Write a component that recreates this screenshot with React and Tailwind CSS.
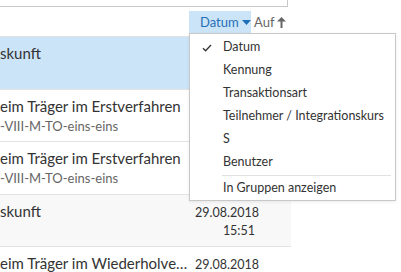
import React from 'react';

const rows = [
  { title: 'skunft', sub: '', date: '', time: '', bg: 'bg-[#cce4f7]' },
  { title: 'eim Träger im Erstverfahren', sub: '-VIII-M-TO-eins-eins', date: '', time: '', bg: 'bg-white' },
  { title: 'eim Träger im Erstverfahren', sub: '-VIII-M-TO-eins-eins', date: '', time: '', bg: 'bg-white' },
  { title: 'skunft', sub: '', date: '29.08.2018', time: '15:51', bg: 'bg-[#f8f8f8]' },
  { title: 'eim Träger im Wiederholverfahren', sub: '', date: '29.08.2018', time: '', bg: 'bg-white' },
];

const menuItems = ['Datum', 'Kennung', 'Transaktionsart', 'Teilnehmer / Integrationskurs', 'S', 'Benutzer'];

const Check = () => (
  <svg width="10" height="8" viewBox="0 0 10 8" className="text-[#333]">
    <path d="M1 4.2 L3.6 6.8 L9 1" fill="none" stroke="currentColor" strokeWidth="1.3" />
  </svg>
);

const App = () => {
  return (
    <div className="relative w-[401px] h-[272px] overflow-hidden bg-white text-[#333] font-['Lato',sans-serif]">
      {/* search box remains */}
      <div className="h-[7px] w-[288px] border-b border-r border-[#c8c8c8]" />

      {/* sort bar */}
      <div className="w-[291px] h-[29px] pt-[4px] flex items-start">
        <div className="ml-[189px] h-[22px] w-[62px] bg-[#cce4f7] flex items-center pl-[11px] gap-[3px]">
          <span className="text-[13px] leading-none text-[#1f6fb8]">Datum</span>
          <svg width="9" height="5" viewBox="0 0 9 5">
            <path d="M0 0 L9 0 L4.5 5 Z" fill="#1f6fb8" />
          </svg>
        </div>
        <div className="h-[22px] flex items-center ml-[3px] gap-[3px] text-[#666]">
          <span className="text-[13px] leading-none">Auf</span>
          <svg width="9" height="11" viewBox="0 0 9 11">
            <path d="M4.5 0 L9 4.5 L5.5 4.5 L5.5 11 L3.5 11 L3.5 4.5 L0 4.5 Z" fill="#666" />
          </svg>
        </div>
      </div>

      {/* list */}
      <div className="w-[291px] border-t border-[#e3e3e3]">
        {rows.map((r, i) => (
          <div key={i} className={`h-[52.5px] border-b border-[#e3e3e3] flex ${r.bg}`}>
            <div className="flex-1 min-w-0 pt-[6px] pr-[4px]">
              <div className="text-[15px] leading-[20px] truncate">{r.title}</div>
              {r.sub && <div className="text-[13px] leading-[18px] mt-[1px] text-[#666] truncate">{r.sub}</div>}
            </div>
            <div className="w-[96px] shrink-0 pt-[9px] pr-[36px] text-right text-[12.5px] leading-[18px]">
              {r.date && <div>{r.date}</div>}
              {r.time && <div>{r.time}</div>}
            </div>
          </div>
        ))}
      </div>

      {/* sort dropdown */}
      <div className="absolute left-[189px] top-[33px] w-[207px] bg-white border border-[#c8c8c8] shadow-[0_1px_3px_rgba(0,0,0,0.08)] pt-[2px]">
        {menuItems.map((m, i) => (
          <div key={m} className="h-[23px] flex items-center whitespace-nowrap">
            <div className="w-[33px] flex justify-center pl-[1px]">{i === 0 && <Check />}</div>
            <span className="text-[12.5px] leading-none">{m}</span>
          </div>
        ))}
        <div className="ml-[32px] mr-[4px] my-[1px] h-px bg-[#e1e1e1]" />
        <div className="h-[23px] flex items-center pl-[33px]">
          <span className="text-[12.5px] leading-none">In Gruppen anzeigen</span>
        </div>
      </div>
    </div>
  );
};

export default App;
